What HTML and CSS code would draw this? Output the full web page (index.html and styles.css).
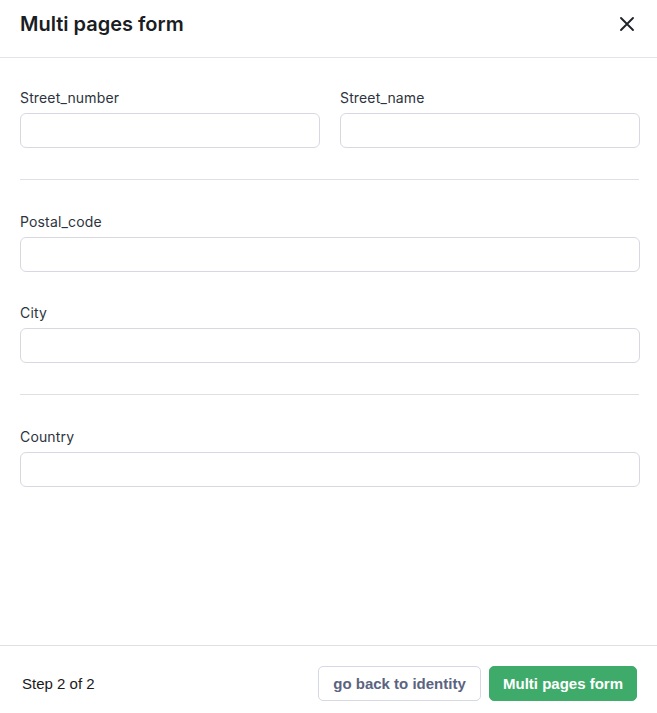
FILE: index.html
```html
<!DOCTYPE html>
<html lang="en">
<head>
<meta charset="utf-8">
<title>Multi pages form</title>
<link rel="stylesheet" href="styles.css">
</head>
<body>
<div class="modal">
  <header class="modal-header">
    <h1 class="modal-title">Multi pages form</h1>
    <button class="close-btn" aria-label="Close">
      <svg width="16" height="16" viewBox="0 0 16 16" fill="none" stroke="#1f2329" stroke-width="1.9" stroke-linecap="round"><path d="M2 2L14 14M14 2L2 14"/></svg>
    </button>
  </header>
  <main class="modal-body">
    <div class="row two">
      <div class="field">
        <label class="label">Street_number</label>
        <input class="input" type="text">
      </div>
      <div class="field">
        <label class="label">Street_name</label>
        <input class="input" type="text">
      </div>
    </div>
    <hr class="divider">
    <div class="stack">
      <div class="field">
        <label class="label">Postal_code</label>
        <input class="input" type="text">
      </div>
      <div class="field">
        <label class="label">City</label>
        <input class="input" type="text">
      </div>
    </div>
    <hr class="divider">
    <div class="stack">
      <div class="field">
        <label class="label">Country</label>
        <input class="input" type="text">
      </div>
    </div>
  </main>
  <footer class="modal-footer">
    <span class="step">Step 2 of 2</span>
    <div class="actions">
      <button class="btn btn-outline">go back to identity</button>
      <button class="btn btn-primary">Multi pages form</button>
    </div>
  </footer>
</div>
</body>
</html>
```
FILE: styles.css
```css
* { box-sizing: border-box; }
html, body { margin: 0; padding: 0; background: #ffffff; }
body { font-family: "Inter", "Liberation Sans", sans-serif; }
.modal { display: flex; flex-direction: column; height: 713px; }
.modal-header {
  height: 58px;
  display: flex;
  justify-content: space-between;
  align-items: flex-start;
  padding: 10px 22px 0 20px;
  border-bottom: 1px solid #e3e3ea;
}
.modal-title {
  margin: 0;
  font-size: 20px;
  line-height: 28px;
  font-weight: 600;
  color: #1a1d23;
  letter-spacing: 0;
}
.close-btn {
  border: 0;
  background: transparent;
  padding: 0;
  margin-top: 6px;
  width: 16px;
  height: 16px;
  display: flex;
  cursor: pointer;
}
.modal-body {
  flex: 1;
  padding: 30px 17px 0 20px;
}
.row.two { display: grid; grid-template-columns: 1fr 1fr; gap: 20px; }
.stack { display: flex; flex-direction: column; gap: 31px; }
.field { display: flex; flex-direction: column; gap: 5px; }
.label {
  font-size: 14px;
  line-height: 20px;
  color: #2d3440;
  letter-spacing: 0.15px;
}
.input {
  height: 35px;
  width: 100%;
  border: 1px solid #d8d8e2;
  border-radius: 6px;
  background: #fff;
  font: inherit;
  margin: 0;
}
.divider {
  border: 0;
  height: 1px;
  background: #dfdfe6;
  margin: 31px 1px 32px 0;
}
.modal-footer {
  height: 68px;
  border-top: 1px solid #e0e0e8;
  display: flex;
  justify-content: space-between;
  align-items: flex-start;
  padding: 20px 20px 0 22px;
}
.step {
  font-family: "Liberation Sans", Arial, sans-serif;
  font-size: 15px;
  line-height: 35px;
  color: #1a1a1a;
}
.actions { display: flex; gap: 8px; }
.btn {
  height: 35px;
  padding: 0 10px;
  border-radius: 5px;
  font-family: "Liberation Sans", Arial, sans-serif;
  font-weight: 700;
  font-size: 15px;
  cursor: pointer;
}
.btn-outline {
  background: #fff;
  border: 1px solid #d6d8e2;
  color: #5a6480;
  width: 163px;
}
.btn-primary {
  background: #3fab6b;
  border: 1px solid #3fab6b;
  color: #fff;
  width: 148px;
}
```
